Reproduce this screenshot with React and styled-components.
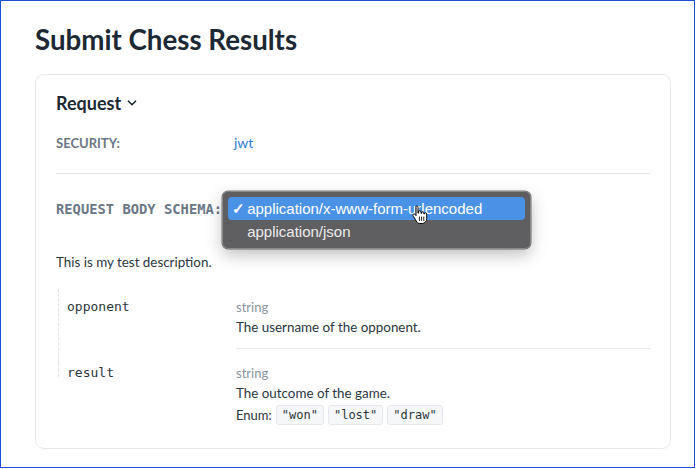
import { createGlobalStyle, styled } from "styled-components";

const GlobalStyle = createGlobalStyle`
    html, body {
        margin: 0;
        padding: 0;
        background: #fff;
    }
    * {
        box-sizing: border-box;
    }
`;

const sans = `Lato, "Noto Sans", sans-serif`;
const mono = `"DejaVu Sans Mono", "Liberation Mono", monospace`;
const system = `"Liberation Sans", Arial, sans-serif`;

const properties = [
    { name: "opponent", type: "string", description: "The username of the opponent." },
    { name: "result", type: "string", description: "The outcome of the game.", enumValues: ["won", "lost", "draw"] },
];

const Chevron = () => (
    <svg width="10" height="10" viewBox="0 0 10 10" fill="none">
        <path d="M1.5 3.2 5 6.7l3.5-3.5" stroke="#1c2833" strokeWidth="1.6" strokeLinecap="round" strokeLinejoin="round" />
    </svg>
);

const HandCursor = () => (
    <svg width="17" height="20" viewBox="0 0 17 20">
        <path
            d="M5.5 1c.9 0 1.5.6 1.5 1.5v5.7h.4V7c0-.8.6-1.3 1.3-1.3S10 6.2 10 7v1.5h.4V8c0-.8.6-1.3 1.3-1.3s1.2.5 1.2 1.3v1h.3c0-.7.6-1.2 1.2-1.2s1.3.5 1.3 1.3v4.6c0 2.7-1.8 4.8-4.4 4.8H8.8c-1.3 0-2.3-.6-3-1.6L2.2 11.2c-.5-.7-.3-1.5.3-1.9.6-.4 1.4-.3 1.8.3l.7 1V2.5C5 1.6 4.6 1 5.5 1z"
            fill="#fff"
            stroke="#000"
            strokeWidth="1"
            strokeLinejoin="round"
        />
        <path d="M8.4 12v3.5M10.6 12v3.5M12.8 12v3.5" stroke="#000" strokeWidth="0.9" strokeLinecap="round" />
    </svg>
);

const App = () => {
    return (
        <>
            <GlobalStyle />
            <Frame>
                <Title>Submit Chess Results</Title>
                <Card>
                    <SectionToggle>
                        Request <Chevron />
                    </SectionToggle>
                    <SecurityRow>
                        <Label>Security:</Label>
                        <SchemeLink>jwt</SchemeLink>
                    </SecurityRow>
                    <Divider />
                    <SchemaRow>
                        <SchemaLabel>Request Body Schema:</SchemaLabel>
                        <SelectAnchor>
                            <Popup>
                                <Option $selected>
                                    <Check>✓</Check>application/x-www-form-urlencoded
                                </Option>
                                <Option>application/json</Option>
                                <Cursor>
                                    <HandCursor />
                                </Cursor>
                            </Popup>
                        </SelectAnchor>
                    </SchemaRow>
                    <Description>This is my test description.</Description>
                    <PropTable>
                        {properties.map((prop, index) => (
                            <PropRow key={prop.name} $last={index === properties.length - 1}>
                                <PropName>{prop.name}</PropName>
                                <PropDetails $last={index === properties.length - 1}>
                                    <PropType>{prop.type}</PropType>
                                    <PropText>{prop.description}</PropText>
                                    {prop.enumValues && (
                                        <EnumLine>
                                            Enum:
                                            {prop.enumValues.map((value) => (
                                                <Chip key={value}>"{value}"</Chip>
                                            ))}
                                        </EnumLine>
                                    )}
                                </PropDetails>
                            </PropRow>
                        ))}
                    </PropTable>
                </Card>
            </Frame>
        </>
    );
};

const Frame = styled.div`
    width: 695px;
    height: 468px;
    border: 1px solid #1b4fd8;
    padding: 24px 23px 0 34px;
    font-family: ${sans};
    color: #2b3640;
`;

const Title = styled.h1`
    margin: 0 0 19px 0;
    font-size: 27.7px;
    line-height: 30px;
    font-weight: 700;
    color: #1c2833;
`;

const Card = styled.div`
    border: 1px solid #e6e8eb;
    border-radius: 9px;
    padding: 16px 19px 23px 20px;
`;

const SectionToggle = styled.div`
    display: flex;
    align-items: center;
    gap: 6px;
    font-size: 18px;
    font-weight: 700;
    line-height: 24px;
    color: #1c2833;
`;

const SecurityRow = styled.div`
    display: grid;
    grid-template-columns: 178px 1fr;
    align-items: center;
    padding: 18px 0 20px;
    line-height: 20px;
`;

const Label = styled.span`
    font-size: 13px;
    font-weight: 700;
    text-transform: uppercase;
    color: #6b7785;
`;

const SchemeLink = styled.a`
    font-size: 14px;
    color: #2d7bd7;
    text-decoration: none;
`;

const Divider = styled.div`
    height: 1px;
    background: #e6e8eb;
`;

const SchemaRow = styled.div`
    display: flex;
    align-items: center;
    margin-top: 25px;
    height: 20px;
`;

const SchemaLabel = styled.span`
    font-family: ${mono};
    font-size: 13.8px;
    font-weight: 700;
    text-transform: uppercase;
    color: #6b7785;
`;

const SelectAnchor = styled.div`
    position: relative;
    width: 1px;
    height: 20px;
`;

const Popup = styled.div`
    position: absolute;
    left: 0;
    top: -8px;
    width: 309px;
    padding: 5px;
    background: #5f5e61;
    border: 1px solid #8a898c;
    border-radius: 6px;
    box-shadow: 0 6px 16px rgba(0, 0, 0, 0.25), 0 0 0 0.5px rgba(0, 0, 0, 0.5);
    z-index: 10;
`;

const Option = styled.div`
    display: flex;
    align-items: center;
    height: 23px;
    padding-left: 19px;
    border-radius: 4px;
    font-family: ${system};
    font-size: 15px;
    color: ${({ $selected }) => ($selected ? "#fff" : "#ececec")};
    background: ${({ $selected }) => ($selected ? "#4a92e6" : "transparent")};
    position: relative;
`;

const Check = styled.span`
    position: absolute;
    left: 4px;
    font-size: 15px;
    font-weight: 700;
`;

const Cursor = styled.div`
    position: absolute;
    left: 188px;
    top: 13px;
    line-height: 0;
`;

const Description = styled.p`
    margin: 33px 0 0;
    font-size: 13.4px;
    line-height: 20px;
    color: #2b3640;
`;

const PropTable = styled.div`
    margin-top: 25px;
`;

const PropRow = styled.div`
    display: grid;
    grid-template-columns: 180px 1fr;
    position: relative;
    &::before {
        content: "";
        position: absolute;
        left: 2px;
        top: ${({ $last }) => ($last ? "-10px" : "-8px")};
        height: ${({ $last }) => ($last ? "24px" : "calc(100% + 10px)")};
        border-left: 1px dashed #dfe2e6;
    }
`;

const PropName = styled.div`
    padding: 0 0 0 11px;
    font-family: ${mono};
    font-size: 13px;
    line-height: 20px;
    color: #2b3640;
`;

const PropDetails = styled.div`
    padding-bottom: ${({ $last }) => ($last ? "0" : "10px")};
    margin-bottom: ${({ $last }) => ($last ? "0" : "14px")};
    border-bottom: ${({ $last }) => ($last ? "none" : "1px solid #e6e8eb")};
`;

const PropType = styled.div`
    font-size: 13px;
    line-height: 20px;
    color: #8a949e;
`;

const PropText = styled.div`
    font-size: 13.4px;
    line-height: 21px;
    color: #2b3640;
`;

const EnumLine = styled.div`
    display: flex;
    align-items: center;
    gap: 4px;
    margin-top: 1px;
    font-size: 13px;
    color: #2b3640;
`;

const Chip = styled.code`
    font-family: ${mono};
    font-size: 12px;
    line-height: 16px;
    padding: 1px 5px;
    background: #f6f7f8;
    border: 1px solid #e6e8eb;
    border-radius: 3px;
    color: #2b3640;
`;

export default App;
